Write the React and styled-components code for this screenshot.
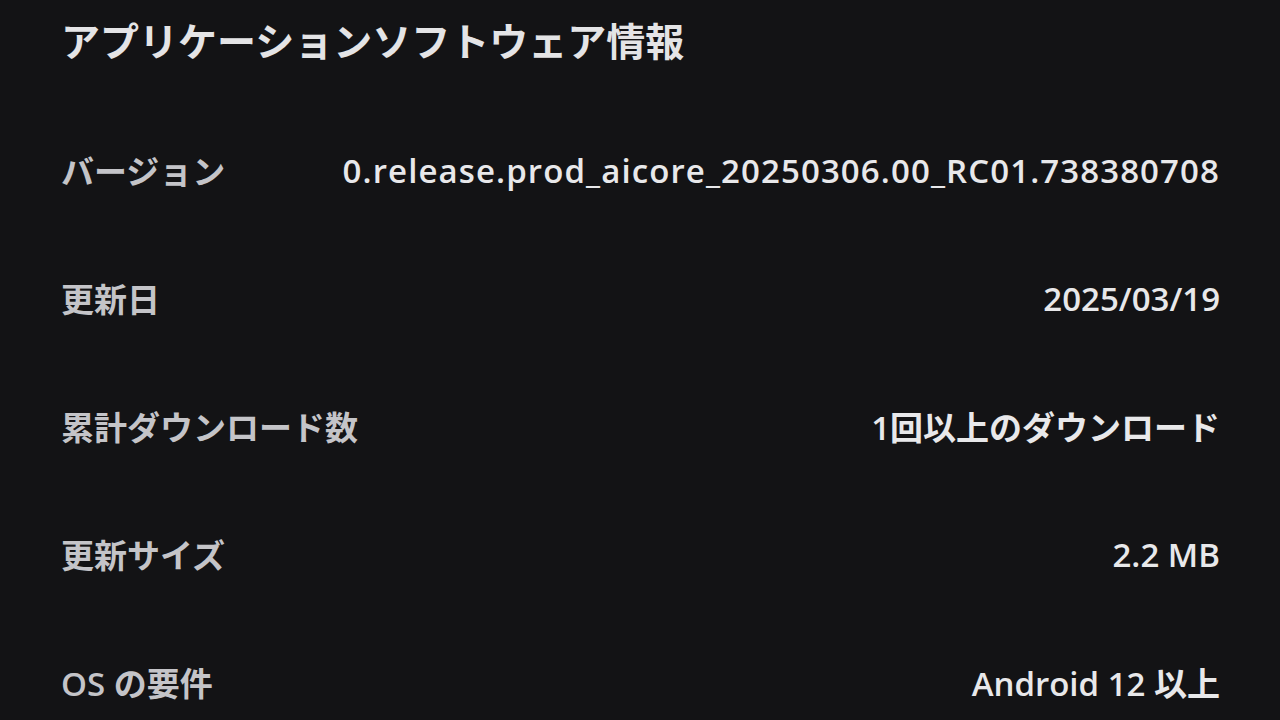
import React from "react";
import styled, { createGlobalStyle } from "styled-components";

const GlobalStyle = createGlobalStyle`
  html, body {
    margin: 0;
    padding: 0;
    background: #131315;
  }
  body {
    font-family: "Open Sans", "Noto Sans CJK JP", sans-serif;
  }
`;

const Page = styled.div`
  width: 1280px;
  height: 720px;
  overflow: hidden;
  box-sizing: border-box;
  padding: 14px 60px 0 61px;
  background: #131315;
`;

const Title = styled.h1`
  margin: 0;
  height: 92px;
  font-family: "Noto Sans CJK JP", sans-serif;
  font-size: 39px;
  line-height: 50px;
  font-weight: 700;
  color: #e4e4e6;
`;

const Row = styled.div`
  height: 128px;
  display: flex;
  align-items: center;
  justify-content: space-between;
  gap: 40px;
`;

const Label = styled.div`
  font-family: "Open Sans", "Noto Sans CJK JP", sans-serif;
  font-size: 33px;
  font-weight: 600;
  color: #c4c4c8;
  white-space: nowrap;
`;

const Value = styled.div`
  font-family: "Open Sans", "Noto Sans CJK JP", sans-serif;
  font-size: 33px;
  font-weight: 600;
  letter-spacing: ${(p) => p.$tracking || 0}px;
  color: #e8e8ea;
  white-space: nowrap;
  text-align: right;
`;

const rows = [
  ["バージョン", "0.release.prod_aicore_20250306.00_RC01.738380708", 1.1],
  ["更新日", "2025/03/19"],
  ["累計ダウンロード数", "1回以上のダウンロード"],
  ["更新サイズ", "2.2 MB"],
  ["OS の要件", "Android 12 以上"],
];

export default function App() {
  return (
    <>
      <GlobalStyle />
      <Page>
        <Title>アプリケーションソフトウェア情報</Title>
        {rows.map(([label, value, tracking]) => (
          <Row key={label}>
            <Label>{label}</Label>
            <Value $tracking={tracking}>{value}</Value>
          </Row>
        ))}
      </Page>
    </>
  );
}
